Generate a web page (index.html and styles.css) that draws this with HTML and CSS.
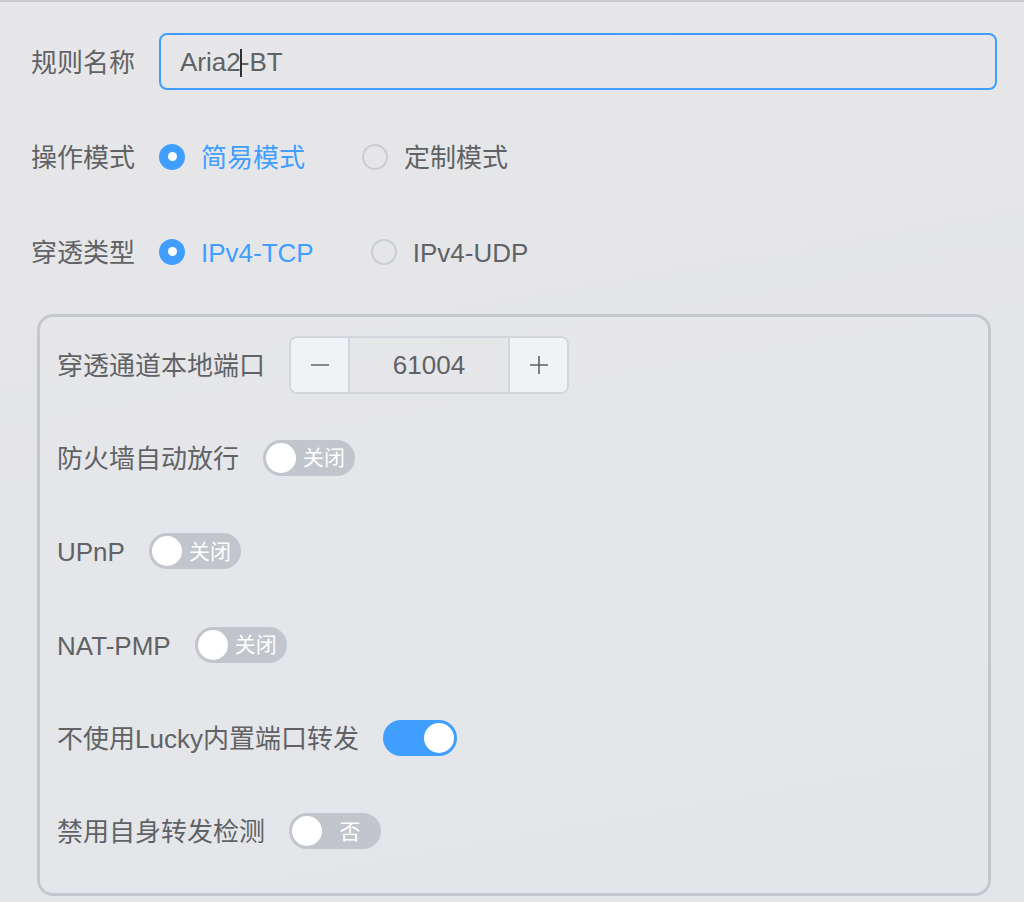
FILE: index.html
```html
<!DOCTYPE html>
<html lang="zh-CN">
<head>
<meta charset="utf-8">
<title>规则</title>
<link rel="stylesheet" href="styles.css">
</head>
<body>
<div class="topline"></div>
<form class="form">
  <div class="row">
    <label class="label">规则名称</label>
    <div class="input focus">
      <span class="input-text">Aria2<span class="caret"></span>-BT</span>
    </div>
  </div>

  <div class="row">
    <label class="label">操作模式</label>
    <div class="radio-group">
      <span class="radio checked"><span class="radio-dot"></span><span class="radio-label">简易模式</span></span>
      <span class="radio"><span class="radio-dot"></span><span class="radio-label">定制模式</span></span>
    </div>
  </div>

  <div class="row">
    <label class="label">穿透类型</label>
    <div class="radio-group">
      <span class="radio checked"><span class="radio-dot"></span><span class="radio-label">IPv4-TCP</span></span>
      <span class="radio"><span class="radio-dot"></span><span class="radio-label">IPv4-UDP</span></span>
    </div>
  </div>

  <div class="box">
    <div class="row">
      <label class="label">穿透通道本地端口</label>
      <div class="number">
        <span class="num-btn">
          <svg width="20" height="20" viewBox="0 0 20 20"><path d="M1 10h18" stroke="#606266" stroke-width="1.6" fill="none"/></svg>
        </span>
        <span class="num-value">61004</span>
        <span class="num-btn">
          <svg width="20" height="20" viewBox="0 0 20 20"><path d="M1 10h18M10 1v18" stroke="#606266" stroke-width="1.6" fill="none"/></svg>
        </span>
      </div>
    </div>

    <div class="row">
      <label class="label">防火墙自动放行</label>
      <span class="switch"><span class="knob"></span><span class="switch-text">关闭</span></span>
    </div>

    <div class="row">
      <label class="label">UPnP</label>
      <span class="switch"><span class="knob"></span><span class="switch-text">关闭</span></span>
    </div>

    <div class="row">
      <label class="label">NAT-PMP</label>
      <span class="switch"><span class="knob"></span><span class="switch-text">关闭</span></span>
    </div>

    <div class="row">
      <label class="label">不使用Lucky内置端口转发</label>
      <span class="switch on"><span class="knob"></span></span>
    </div>

    <div class="row">
      <label class="label">禁用自身转发检测</label>
      <span class="switch"><span class="knob"></span><span class="switch-text">否</span></span>
    </div>
  </div>
</form>
</body>
</html>
```
FILE: styles.css
```css
* { box-sizing: border-box; }
html, body {
  margin: 0;
  padding: 0;
  height: 100%;
}
body {
  background: linear-gradient(170deg, #e7e7e9 0%, #e4e5e8 50%, #e2e5e8 100%);
  font-family: "Liberation Sans", "Noto Sans CJK SC", sans-serif;
  color: #606266;
  font-size: 26px;
  overflow: hidden;
}
.topline {
  height: 2px;
  background: #c9cacd;
}
.form {
  padding: 31px 27px 0 31px;
  display: flex;
  flex-direction: column;
  gap: 38px;
}
.row {
  display: flex;
  align-items: center;
  height: 57px;
}
.label {
  padding-right: 24px;
  color: #606266;
  white-space: nowrap;
  line-height: 1;
  padding-top: 2px;
}
.input {
  flex: 1;
  height: 57px;
  border: 2px solid #409eff;
  border-radius: 8px;
  display: flex;
  align-items: center;
  padding-left: 19px;
}
.input-text {
  color: #606266;
  display: inline-flex;
  align-items: center;
  padding-top: 2px;
}
.caret {
  display: inline-block;
  width: 2px;
  height: 28px;
  background: #303133;
  margin: 0 -1px 0 -1px;
}
.radio-group {
  display: flex;
  align-items: center;
}
.radio {
  display: inline-flex;
  align-items: center;
  margin-right: 57px;
}
.radio-dot {
  width: 26px;
  height: 26px;
  border-radius: 50%;
  border: 2px solid #c9ccd2;
  margin-right: 16px;
  position: relative;
}
.radio.checked .radio-dot {
  background: #409eff;
  border-color: #409eff;
}
.radio.checked .radio-dot::after {
  content: "";
  position: absolute;
  left: 50%;
  top: 50%;
  width: 9px;
  height: 9px;
  margin: -4.5px 0 0 -4.5px;
  border-radius: 50%;
  background: #fff;
}
.radio-label { line-height: 1; padding-top: 2px; }
.radio.checked .radio-label { color: #409eff; }

.box {
  margin: -4px 6px 0 6px;
  border: 3px solid #c4c7cd;
  border-radius: 16px;
  padding: 19px 17px 33px 17px;
  display: flex;
  flex-direction: column;
  gap: 36.4px;
  background: rgba(255,255,255,0.05);
}
.number {
  width: 280px;
  height: 58px;
  border: 2px solid #d3d6dc;
  border-radius: 8px;
  display: flex;
  overflow: hidden;
}
.num-btn {
  width: 59px;
  background: #f1f2f5;
  display: flex;
  align-items: center;
  justify-content: center;
}
.num-btn:first-child { border-right: 2px solid #d3d6dc; }
.num-btn:last-child { border-left: 2px solid #d3d6dc; }
.num-value {
  flex: 1;
  display: flex;
  align-items: center;
  justify-content: center;
  color: #606266;
  padding-top: 2px;
}
.switch {
  width: 92px;
  height: 36px;
  border-radius: 18px;
  background: #c2c5cc;
  position: relative;
  display: inline-flex;
  align-items: center;
  padding: 0 6px 0 36px;
}
.switch .knob {
  position: absolute;
  left: 3px;
  top: 3px;
  width: 30px;
  height: 30px;
  border-radius: 50%;
  background: #fff;
}
.switch-text {
  flex: 1;
  text-align: center;
  color: #fff;
  font-size: 21px;
  line-height: 1;
}
.switch.on {
  width: 74px;
  background: #409eff;
}
.switch.on .knob {
  left: auto;
  right: 3px;
}
```
